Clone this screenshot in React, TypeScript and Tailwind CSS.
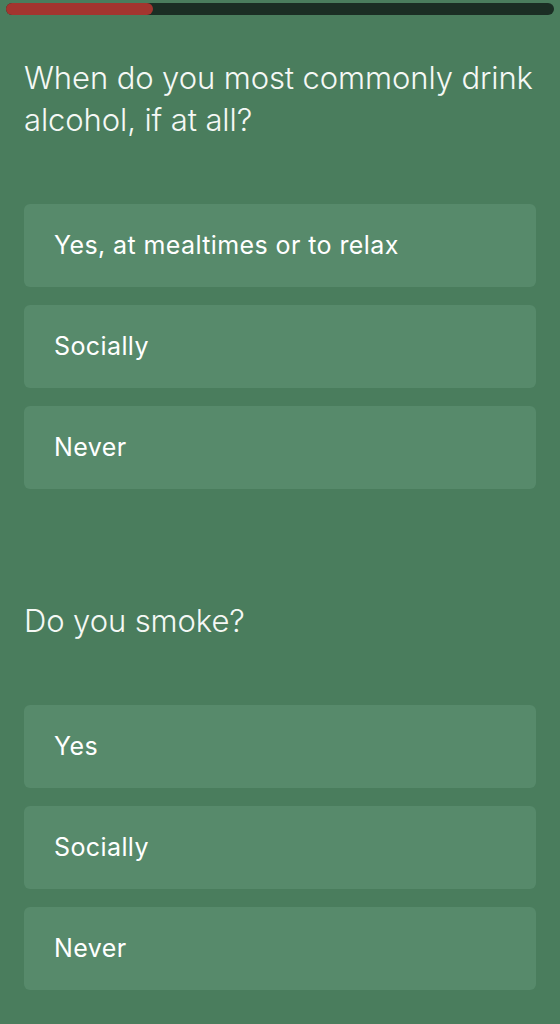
const questions = [
  {
    title: "When do you most commonly drink alcohol, if at all?",
    options: ["Yes, at mealtimes or to relax", "Socially", "Never"],
  },
  {
    title: "Do you smoke?",
    options: ["Yes", "Socially", "Never"],
  },
];

export default function App() {
  return (
    <div className="min-h-[1024px] w-full bg-[#4a7d5d] font-['Inter','Liberation_Sans',sans-serif] text-white">
      <div className="mx-[6px] pt-[3px]">
        <div className="h-3 w-full rounded-full bg-[#1b2e24]">
          <div className="h-3 w-[147px] rounded-full bg-[#a3352f]" />
        </div>
      </div>

      <div className="px-6">
        {questions.map((q, i) => (
          <section key={i} className={i === 0 ? "mt-[42px]" : "mt-[111px]"}>
            <h2 className="text-[31px] font-light leading-[42px] tracking-[-0.1px] text-[#f5f8f5]">
              {q.title}
            </h2>
            <div className="mt-[63px] flex flex-col gap-[18px]">
              {q.options.map((opt) => (
                <button
                  key={opt}
                  type="button"
                  className="flex h-[83px] items-center rounded-md bg-[#578a6b] pl-[30px] text-left text-[25px] tracking-[0.4px] text-white"
                >
                  {opt}
                </button>
              ))}
            </div>
          </section>
        ))}
      </div>
    </div>
  );
}
